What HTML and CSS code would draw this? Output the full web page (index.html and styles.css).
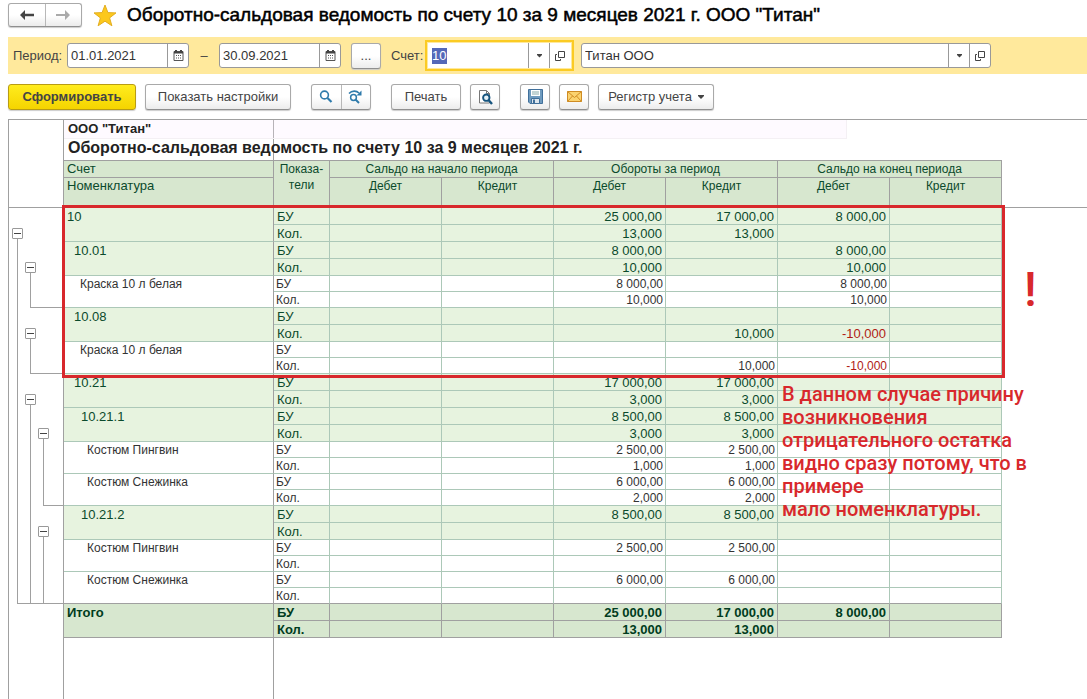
FILE: index.html
```html
<!DOCTYPE html>
<html lang="ru">
<head>
<meta charset="utf-8">
<title>Оборотно-сальдовая ведомость по счету 10</title>
<link rel="stylesheet" href="styles.css">
</head>
<body>
<header class="titlebar">
  <div class="btn-group nav">
    <button type="button" aria-label="Назад"><svg width="14" height="10" viewBox="0 0 14 10"><path d="M5 0v3.8h9v2.4H5V10L0 5z" fill="#444"/></svg></button>
    <button type="button" aria-label="Вперед"><svg width="14" height="10" viewBox="0 0 14 10"><path d="M9 0v4H0v2h9v4l5-5z" fill="#aaa"/></svg></button>
  </div>
  <svg class="star" width="24" height="23" viewBox="0 0 24 23"><path d="M12 1l2.9 7.6 8.1.3-6.4 5 2.3 7.9L12 17.2l-6.900 4.600 2.300-7.900L1 8.900l8.100-.3z" fill="#fcc81c" stroke="#e3ae22"/></svg>
  <h1>Оборотно-сальдовая ведомость по счету 10 за 9 месяцев 2021 г. ООО "Титан"</h1>
</header>

<form class="filters">
  <label class="lbl-period" for="from">Период:</label>
  <div class="field date">
    <input id="from" type="text" value="01.01.2021">
    <button type="button" aria-label="Календарь"><svg width="11" height="11" viewBox="0 0 11 11"><path d="M1 1.500h9v9H1z" fill="none" stroke="#555"/><path d="M1 2.500h9M3 0v3M8 0v3" stroke="#444" stroke-width="2"/><path d="M3 5.500h5M3 8h5" stroke="#555" stroke-dasharray="1 1"/></svg></button>
  </div>
  <span class="dash">–</span>
  <div class="field date">
    <input id="to" type="text" value="30.09.2021" aria-label="Конец периода">
    <button type="button" aria-label="Календарь"><svg width="11" height="11" viewBox="0 0 11 11"><path d="M1 1.500h9v9H1z" fill="none" stroke="#555"/><path d="M1 2.500h9M3 0v3M8 0v3" stroke="#444" stroke-width="2"/><path d="M3 5.500h5M3 8h5" stroke="#555" stroke-dasharray="1 1"/></svg></button>
  </div>
  <button class="btn dots" type="button">...</button>
  <label class="lbl-account" for="account">Счет:</label>
  <div class="field account">
    <div class="entry"><input id="account" type="text" value="10"></div>
    <button type="button" aria-label="Выбрать"><svg width="5" height="4" viewBox="0 0 5 4"><path d="M0 0h5v1L2.500 3.500 0 1z" fill="#444"/></svg></button>
    <button type="button" aria-label="Открыть"><svg width="10" height="10" viewBox="0 0 10 10"><path d="M3.500.5h6v6h-6zM2 3.500H.5v6h5V8" fill="none" stroke="#444"/></svg></button>
  </div>
  <div class="field org">
    <input type="text" value="Титан ООО" aria-label="Организация">
    <button type="button" aria-label="Выбрать"><svg width="5" height="4" viewBox="0 0 5 4"><path d="M0 0h5v1L2.500 3.500 0 1z" fill="#444"/></svg></button>
    <button type="button" aria-label="Открыть"><svg width="10" height="10" viewBox="0 0 10 10"><path d="M3.500.5h6v6h-6zM2 3.500H.5v6h5V8" fill="none" stroke="#444"/></svg></button>
  </div>
</form>

<div class="toolbar">
  <button class="btn primary" type="button">Сформировать</button>
  <button class="btn settings" type="button">Показать настройки</button>
  <div class="btn-group search">
    <button type="button" aria-label="Найти"><svg width="14" height="14" viewBox="0 0 14 14"><circle cx="5.500" cy="5" r="3.900" fill="none" stroke="#2f7bab" stroke-width="1.600"/><path d="M8.500 8l4 4" stroke="#2f7bab" stroke-width="2.200"/></svg></button>
    <button type="button" aria-label="Найти далее"><svg width="15" height="14" viewBox="0 0 15 14"><circle cx="5.500" cy="7.500" r="2.900" fill="none" stroke="#2f7bab" stroke-width="1.500"/><path d="M7.500 9.500l3.500 3.500" stroke="#2f7bab" stroke-width="2"/><path d="M1 3.500C4 .3 8.500.6 11 3" fill="none" stroke="#2f7bab" stroke-width="1.600"/><path d="M13.500.5v5H8.500z" fill="#2f7bab"/></svg></button>
  </div>
  <button class="btn print" type="button">Печать</button>
  <button class="btn icon" type="button" aria-label="Предварительный просмотр"><svg width="15" height="16" viewBox="0 0 15 16"><path d="M1.500 1.500h7l3 3V14H1.500z" fill="#fff" stroke="#777"/><path d="M8.500 1.500v3h3" fill="none" stroke="#777"/><circle cx="8.300" cy="8.700" r="3.200" fill="#e7f2f8" stroke="#17557f" stroke-width="1.900"/><path d="M10.500 11l3.500 4" stroke="#17557f" stroke-width="2.400"/></svg></button>
  <button class="btn icon save" type="button" aria-label="Сохранить"><svg width="15" height="15" viewBox="0 0 15 15"><path d="M.5.5h14v14H2l-1.500-1.500z" fill="#6f9bbf" stroke="#41709b"/><path d="M3 1h9v6H3z" fill="#fff"/><path d="M4 3h7M4 5h7" stroke="#8aa"/><path d="M3.500 9.500h8v5h-8z" fill="#dce6ee" stroke="#41709b"/><path d="M5 10.500h2v3.500H5z" fill="#41709b"/></svg></button>
  <button class="btn icon" type="button" aria-label="Отправить"><svg width="15" height="11" viewBox="0 0 15 11"><path d="M.5.5h14v10H.5z" fill="#fbd36f" stroke="#cf8c24"/><path d="M.5.5l7 6 7-6M.5 10.500l5-5.500M14.500 10.500L9.500 5" fill="none" stroke="#cf8c24"/></svg></button>
  <button class="btn register" type="button">Регистр учета <svg width="6" height="4" viewBox="0 0 6 4"><path d="M0 0h6v1L3 4 0 1z" fill="#444"/></svg></button>
</div>

<main class="sheet">
  <div class="gutter">
    <div class="gutter-head"></div>
    <div class="tree">
      <div class="branch b10"><button type="button" aria-label="Свернуть 10"></button></div>
      <div class="branch b1001"><button type="button" aria-label="Свернуть 10.01"></button></div>
      <div class="branch b1008"><button type="button" aria-label="Свернуть 10.08"></button></div>
      <div class="branch b1021"><button type="button" aria-label="Свернуть 10.21"></button></div>
      <div class="branch b10211"><button type="button" aria-label="Свернуть 10.21.1"></button></div>
      <div class="branch b10212"><button type="button" aria-label="Свернуть 10.21.2"></button></div>
    </div>
  </div>
  <div class="report">
    <div class="org-name">ООО "Титан"</div>
    <h2>Оборотно-сальдовая ведомость по счету 10 за 9 месяцев 2021 г.</h2>
    <table>
      <colgroup><col class="c-name"><col class="c-kind"><col span="6" class="c-num"></colgroup>
      <thead>
        <tr><th class="left">Счет</th><th rowspan="2">Показа-<br>тели</th><th colspan="2">Сальдо на начало периода</th><th colspan="2">Обороты за период</th><th colspan="2">Сальдо на конец периода</th></tr>
        <tr class="second"><th class="left">Номенклатура</th><th>Дебет</th><th>Кредит</th><th>Дебет</th><th>Кредит</th><th>Дебет</th><th>Кредит</th></tr>
      </thead>
      <tbody class="acc">
        <tr><td class="name" rowspan="2">10</td><td class="kind">БУ</td><td></td><td></td><td>25 000,00</td><td>17 000,00</td><td>8 000,00</td><td></td></tr>
        <tr><td class="kind">Кол.</td><td></td><td></td><td>13,000</td><td>13,000</td><td></td><td></td></tr>
        <tr><td class="name l1" rowspan="2">10.01</td><td class="kind">БУ</td><td></td><td></td><td>8 000,00</td><td></td><td>8 000,00</td><td></td></tr>
        <tr><td class="kind">Кол.</td><td></td><td></td><td>10,000</td><td></td><td>10,000</td><td></td></tr>
      </tbody>
      <tbody class="item">
        <tr><td class="name l2" rowspan="2">Краска 10 л белая</td><td class="kind">БУ</td><td></td><td></td><td>8 000,00</td><td></td><td>8 000,00</td><td></td></tr>
        <tr><td class="kind">Кол.</td><td></td><td></td><td>10,000</td><td></td><td>10,000</td><td></td></tr>
      </tbody>
      <tbody class="acc">
        <tr><td class="name l1" rowspan="2">10.08</td><td class="kind">БУ</td><td></td><td></td><td></td><td></td><td></td><td></td></tr>
        <tr><td class="kind">Кол.</td><td></td><td></td><td></td><td>10,000</td><td class="neg">-10,000</td><td></td></tr>
      </tbody>
      <tbody class="item">
        <tr><td class="name l2" rowspan="2">Краска 10 л белая</td><td class="kind">БУ</td><td></td><td></td><td></td><td></td><td></td><td></td></tr>
        <tr><td class="kind">Кол.</td><td></td><td></td><td></td><td>10,000</td><td class="neg">-10,000</td><td></td></tr>
      </tbody>
      <tbody class="acc">
        <tr><td class="name l1" rowspan="2">10.21</td><td class="kind">БУ</td><td></td><td></td><td>17 000,00</td><td>17 000,00</td><td></td><td></td></tr>
        <tr><td class="kind">Кол.</td><td></td><td></td><td>3,000</td><td>3,000</td><td></td><td></td></tr>
        <tr><td class="name l2" rowspan="2">10.21.1</td><td class="kind">БУ</td><td></td><td></td><td>8 500,00</td><td>8 500,00</td><td></td><td></td></tr>
        <tr><td class="kind">Кол.</td><td></td><td></td><td>3,000</td><td>3,000</td><td></td><td></td></tr>
      </tbody>
      <tbody class="item">
        <tr><td class="name l3" rowspan="2">Костюм Пингвин</td><td class="kind">БУ</td><td></td><td></td><td>2 500,00</td><td>2 500,00</td><td></td><td></td></tr>
        <tr><td class="kind">Кол.</td><td></td><td></td><td>1,000</td><td>1,000</td><td></td><td></td></tr>
        <tr><td class="name l3" rowspan="2">Костюм Снежинка</td><td class="kind">БУ</td><td></td><td></td><td>6 000,00</td><td>6 000,00</td><td></td><td></td></tr>
        <tr><td class="kind">Кол.</td><td></td><td></td><td>2,000</td><td>2,000</td><td></td><td></td></tr>
      </tbody>
      <tbody class="acc">
        <tr><td class="name l2" rowspan="2">10.21.2</td><td class="kind">БУ</td><td></td><td></td><td>8 500,00</td><td>8 500,00</td><td></td><td></td></tr>
        <tr><td class="kind">Кол.</td><td></td><td></td><td></td><td></td><td></td><td></td></tr>
      </tbody>
      <tbody class="item">
        <tr><td class="name l3" rowspan="2">Костюм Пингвин</td><td class="kind">БУ</td><td></td><td></td><td>2 500,00</td><td>2 500,00</td><td></td><td></td></tr>
        <tr><td class="kind">Кол.</td><td></td><td></td><td></td><td></td><td></td><td></td></tr>
        <tr><td class="name l3 last" rowspan="2">Костюм Снежинка</td><td class="kind">БУ</td><td></td><td></td><td>6 000,00</td><td>6 000,00</td><td></td><td></td></tr>
        <tr class="last"><td class="kind">Кол.</td><td></td><td></td><td></td><td></td><td></td><td></td></tr>
      </tbody>
      <tfoot>
        <tr><td class="name" rowspan="2">Итого</td><td class="kind">БУ</td><td></td><td></td><td>25 000,00</td><td>17 000,00</td><td>8 000,00</td><td></td></tr>
        <tr><td class="kind">Кол.</td><td></td><td></td><td>13,000</td><td>13,000</td><td></td><td></td></tr>
      </tfoot>
    </table>
  </div>
  <div class="frame"></div>
  <div class="mark">!</div>
  <p class="note">В данном случае причину<br>возникновения<br>отрицательного остатка<br>видно сразу потому, что в<br>примере<br>мало номенклатуры.</p>
</main>
</body>
</html>
```
FILE: styles.css
```css
* { box-sizing: border-box; }
html, body { height: 100%; }
body {
  margin: 0;
  padding-left: 8px;
  display: flex;
  flex-direction: column;
  overflow: hidden;
  background: #fff;
  color: #444;
  font: 13px/16px "Liberation Sans", Arial, sans-serif;
}
button, input { font: inherit; color: inherit; margin: 0; padding: 0; }
button { display: flex; align-items: center; justify-content: center; }
svg { display: block; flex: none; }

.btn, .btn-group {
  height: 26px;
  border: 1px solid #a9a9a9;
  border-bottom-color: #8f8f8f;
  border-radius: 3px;
  background: linear-gradient(#fff 50%, #ececec);
  box-shadow: 0 1px 1px #ccc;
}
.btn-group { display: flex; flex: none; }
.btn-group button { flex: 1; border: 0; background: none; }
.btn-group button + button { border-left: 1px solid #b8b8b8; }

.titlebar { display: flex; align-items: center; height: 37px; flex: none; padding-bottom: 7px; }
.nav { width: 74px; height: 24px; }
.star { margin: 0 10px 0 11px; }
h1 { margin: 0; font-size: 19px; line-height: 22px; font-weight: 400; color: #000; -webkit-text-stroke: 0.5px #000; white-space: nowrap; }

.filters { display: flex; align-items: center; height: 37px; flex: none; padding-left: 5px; background: #ffe99c; }
.lbl-period { width: 54px; }
.field { display: flex; height: 25px; border: 1px solid #999; border-radius: 3px; background: #fff; overflow: hidden; color: #333; }
.field input { flex: 1; min-width: 0; border: 0; padding-left: 3px; background: none; outline: 0; }
.field button { width: 21px; border: 0; border-left: 1px solid #999; background: none; }
.date { width: 122px; }
.dash { width: 30px; text-align: center; }
.dots { width: 30px; margin: 0 10px; }
.lbl-account { width: 34px; }
.account { width: 149px; height: 31px; border: 2px solid #fbcb24; border-radius: 0; box-shadow: inset 0 0 0 1px #ffe99c; padding: 1px 2px; }
.entry { flex: 1; display: flex; align-items: center; padding-left: 3px; }
.entry input { flex: none; width: 15px; padding: 0; background: #5468b8; color: #fff; }
.org { width: 410px; margin-left: 7px; }

.toolbar { display: flex; align-items: center; height: 45px; flex: none; gap: 9px; }
.primary { width: 128px; font-weight: 700; border-color: #b89c14; background: linear-gradient(#ffec1e, #f5d400); color: #444; }
.settings { width: 146px; }
.search { width: 60px; margin: 0 11px; }
.print { width: 70px; }
.icon { width: 30px; }
.save { margin-left: 11px; }
.register { width: 116px; gap: 6px; }

.sheet {
  position: relative;
  flex: 1;
  display: flex;
  border: solid #a0a0a0;
  border-width: 1px 0 0 1px;
  background:
    linear-gradient(#a0a0a0, #a0a0a0) 0 87px / 100% 1px no-repeat,
    linear-gradient(#a0a0a0, #a0a0a0) 264px 0 / 1px 100% no-repeat;
}
.gutter { width: 55px; flex: none; border-right: 1px solid #a0a0a0; }
.gutter-head { height: 88px; }
.tree {
  display: grid;
  padding-left: 8px;
  grid-template-columns: 13px 13px 1fr;
  grid-template-rows: repeat(4, 17px) repeat(2, 16px) repeat(2, 17px) repeat(2, 16px) repeat(4, 17px) repeat(4, 16px) repeat(2, 17px) repeat(4, 16px);
}
.branch { margin-top: 3px; border: solid #a0a0a0; border-width: 0 0 1px 1px; }
.branch button { width: 11px; height: 11px; margin-left: -6px; border: 1px solid #999; border-radius: 1px; background: linear-gradient(#444, #444) center / 7px 1px no-repeat #fff; }
.b10 { grid-area: 2 / 1 / 25 / 4; }
.b1001 { grid-area: 4 / 2 / 7 / 4; }
.b1008 { grid-area: 8 / 2 / 11 / 4; }
.b1021 { grid-area: 12 / 2 / 25 / 4; }
.b10211 { grid-area: 14 / 3 / 19 / 4; }
.b10212 { grid-area: 20 / 3 / 25 / 4; }

.org-name { width: 783px; height: 19px; padding-left: 4px; border: solid #f4f0f4; border-width: 0 1px 1px 0; background: rgba(250, 235, 255, 0.25); line-height: 18px; font-weight: 700; color: #222; }
h2 { margin: 0; padding-left: 4px; height: 21px; font-size: 16px; line-height: 18px; color: #222; white-space: nowrap; }

table { table-layout: fixed; width: 938px; border-collapse: separate; border-spacing: 0; border-top: 1px solid #a0a0a0; }
.c-name { width: 210px; }
.c-kind { width: 56px; }
.c-num { width: 112px; }
th, td { height: 17px; padding: 0 3px; border: solid #acc8b8; border-width: 0 1px 1px 0; text-align: right; vertical-align: top; line-height: 16px; white-space: nowrap; }
td { padding-top: 1px; line-height: 15px; }
th { border-color: #a0a0a0; background: #d7e7cf; color: #0b4a2c; font-size: 12px; font-weight: 400; text-align: center; }
.second th { height: 30px; }
th.left { text-align: left; font-size: 13px; }
.name, .kind { text-align: left; }
.name { border-right-color: #a0a0a0; }
.acc td { background: #e7f3df; color: #0b4a2c; }
.item td { height: 16px; padding: 1px 2px 0; background: #fff; color: #333; font-size: 12px; line-height: 14px; }
td.l1 { padding-left: 10px; }
.acc .l2 { padding-left: 17px; }
.item .l2 { padding-left: 16px; }
.item .l3 { padding-left: 23px; }
.acc .neg, .item .neg { color: #b01c14; }
.last td, .item .last { border-bottom-color: #a0a0a0; }
tfoot td { border-color: #a0a0a0; background: #d7e7cf; color: #003c20; font-weight: 700; }

.frame { position: absolute; left: 53px; top: 85px; width: 943px; height: 173px; border: 3px solid #d8282c; }
.mark { position: absolute; left: 1015px; top: 140px; color: #d8282c; font: 500 48px/60px Roboto, sans-serif; }
.note { position: absolute; left: 773px; top: 263px; margin: 0; color: #d8282c; font: 500 20px/23px Roboto, sans-serif; white-space: nowrap; }
```
